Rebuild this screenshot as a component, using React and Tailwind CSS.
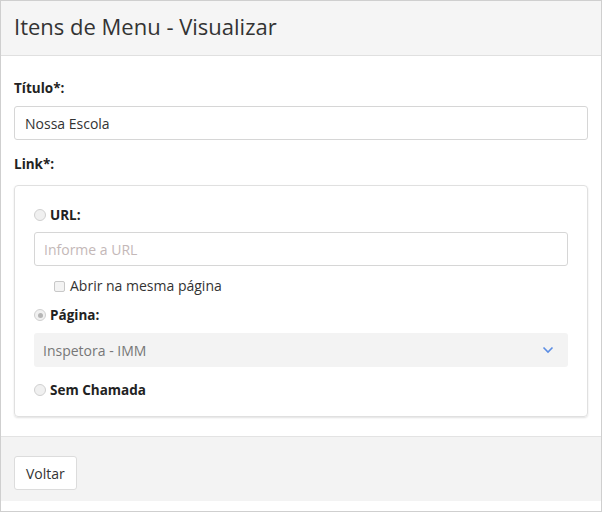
import React from "react";

const font = { fontFamily: '"Open Sans", "Noto Sans", sans-serif' };

function Radio({ checked }) {
    return (
        <span className="inline-flex h-[12px] w-[12px] items-center justify-center rounded-full border border-[#d0d0d0] bg-[#f0f0f0]">
            {checked && <span className="h-[5px] w-[5px] rounded-full bg-[#b5b5b5]" />}
        </span>
    );
}

export default function App() {
    return (
        <div className="h-[512px] w-[602px] border border-[#cfcfcf] bg-white text-[#333]" style={font}>
            <div className="h-[55px] border-b border-[#e0e0e0] bg-[#f5f5f5] px-[13px] pt-[10px]">
                <h1 className="text-[22px] leading-[30px] text-[#333]">Itens de Menu - Visualizar</h1>
            </div>

            <div className="px-[13px] pt-[20px]">
                <label className="block text-[13.5px] font-bold leading-[24px] text-[#222]">Título*:</label>
                <input
                    readOnly
                    value="Nossa Escola"
                    className="mt-[6px] h-[34px] w-full rounded-[3px] border border-[#d6d6d6] px-[10px] text-[14px] text-[#333] outline-none"
                />
                <label className="mt-[12px] block text-[13.5px] font-bold leading-[24px] text-[#222]">Link*:</label>

                <div className="mt-[9px] h-[232px] rounded-[4px] border border-[#e0e0e0] px-[19px] pt-[17px] shadow-[0_1px_2px_rgba(0,0,0,0.12)]">
                    <div className="flex items-center gap-[4px] text-[13.5px] font-bold leading-[24px] text-[#222]">
                        <Radio />
                        <span>URL:</span>
                    </div>
                    <input
                        readOnly
                        placeholder="Informe a URL"
                        className="mt-[5px] h-[34px] w-full rounded-[3px] border border-[#d6d6d6] px-[9px] text-[14px] placeholder:text-[#c4b8b8] outline-none"
                    />
                    <div className="mt-[8px] flex items-center gap-[5px] pl-[20px] text-[14px] leading-[24px] text-[#333]">
                        <span className="h-[11px] w-[11px] rounded-[2px] border border-[#c8c8c8] bg-[#f3f3f3]" />
                        <span>Abrir na mesma página</span>
                    </div>
                    <div className="mt-[5px] flex items-center gap-[4px] text-[13.5px] font-bold leading-[24px] text-[#222]">
                        <Radio checked />
                        <span>Página:</span>
                    </div>
                    <div className="mt-[6px] flex h-[34px] items-center justify-between rounded-[3px] bg-[#f3f3f3] pl-[9px] pr-[14px] text-[14px] text-[#777]">
                        <span>Inspetora - IMM</span>
                        <svg width="12" height="8" viewBox="0 0 12 8" fill="none">
                            <path d="M1.5 1.5 L6 6 L10.5 1.5" stroke="#5b8de4" strokeWidth="1.6" />
                        </svg>
                    </div>
                    <div className="mt-[11px] flex items-center gap-[4px] text-[13.5px] font-bold leading-[24px] text-[#222]">
                        <Radio />
                        <span>Sem Chamada</span>
                    </div>
                </div>
            </div>

            <div className="mt-[19px] h-[65px] border-t border-[#e3e3e3] bg-[#f3f3f3] px-[13px] pt-[19px]">
                <button className="h-[34px] rounded-[3px] border border-[#dcdcdc] bg-white px-[11px] text-[14px] text-[#333]">
                    Voltar
                </button>
            </div>
        </div>
    );
}
